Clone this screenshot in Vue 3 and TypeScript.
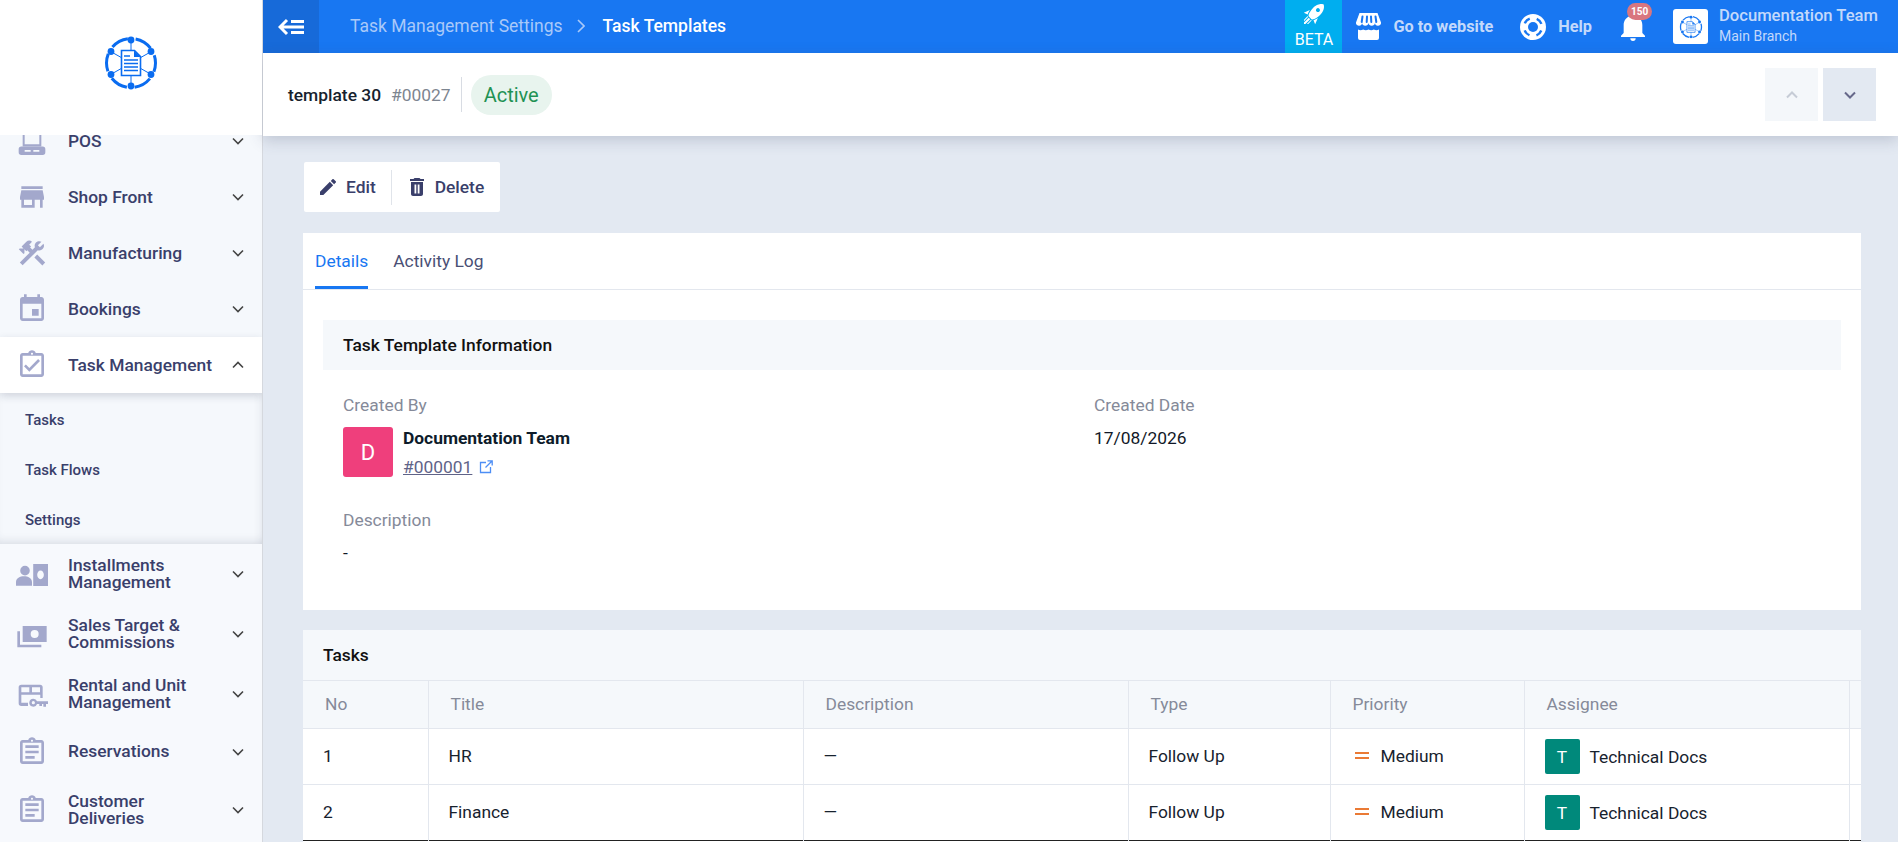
<template>
  <div class="shell">
    <svg class="defs" width="0" height="0">
      <symbol id="doc-logo" viewBox="0 0 56 56">
        <circle cx="28" cy="28" r="24.5" fill="none" stroke="currentColor" stroke-width="3" stroke-dasharray="17.65 8" stroke-dashoffset="8.8" />
        <g stroke="currentColor" stroke-width="1">
          <line x1="28" y1="6" x2="28" y2="50" />
          <line x1="8.5" y1="17" x2="47.5" y2="39" />
          <line x1="47.5" y1="17" x2="8.5" y2="39" />
        </g>
        <g fill="currentColor">
          <circle cx="28" cy="5" r="3.4" />
          <circle cx="28" cy="51" r="3.4" />
          <circle cx="8" cy="16.5" r="3.4" />
          <circle cx="48" cy="16.5" r="3.4" />
          <circle cx="8" cy="39.5" r="3.4" />
          <circle cx="48" cy="39.5" r="3.4" />
        </g>
        <path d="M18.5 15.5h13l6 6v19h-19z" fill="#fff" stroke="currentColor" stroke-width="1.6" />
        <path d="M31 15.5l6.5 6.5H31z" fill="currentColor" />
        <path d="M21 21h6M21 25h14M21 28.5h14M21 32h14M21 35.5h14" stroke="currentColor" stroke-width="1.3" fill="none" />
      </symbol>
    </svg>

    <aside class="sidebar">
      <div class="logo">
        <svg class="logo-mark" width="56" height="56"><use href="#doc-logo" /></svg>
      </div>
      <nav class="menu">
        <template v-for="item in menu" :key="item.label">
          <div class="menu-row" :class="[item.size, { open: item.open }]">
            <svg class="menu-icon" viewBox="0 0 24 24" width="32" height="32">
              <path :d="item.icon" fill-rule="evenodd" />
            </svg>
            <span class="menu-label">{{ item.label }}</span>
            <svg class="menu-chev" viewBox="0 0 12 8" width="12" height="8">
              <path :d="item.open ? 'M1 6.5l5-5 5 5' : 'M1 1.5l5 5 5-5'" />
            </svg>
          </div>
          <div v-if="item.open" class="submenu">
            <div v-for="sub in item.children" :key="sub" class="sub-row">{{ sub }}</div>
          </div>
        </template>
      </nav>
    </aside>

    <div class="main">
      <header class="topbar">
        <button class="toggle" type="button" aria-label="Toggle menu">
          <svg viewBox="0 0 26 18" width="26" height="18">
            <path d="M9 2L2 9l7 7M3 9h23M13 3.5h13M13 14.5h13" fill="none" stroke="#fff" stroke-width="3" />
          </svg>
        </button>
        <div class="crumbs">
          <span class="crumb">Task Management Settings</span>
          <svg viewBox="0 0 8 14" width="8" height="14"><path d="M1 1l6 6-6 6" fill="none" stroke="#a9c9f9" stroke-width="1.6" /></svg>
          <span class="crumb current">Task Templates</span>
        </div>
        <div class="top-right">
          <div class="beta">
            <svg viewBox="0 0 24 24" width="24" height="24">
              <path fill="#fff" d="M13.13 22.19L11.5 18.36C13.07 17.78 14.54 17 15.9 16.09L13.13 22.19M5.64 12.5L1.81 10.87L7.91 8.1C7 9.46 6.22 10.93 5.64 12.5M21.61 2.39C21.61 2.39 16.66 .269 11 5.93C8.81 8.12 7.5 10.53 6.65 12.64C6.37 13.39 6.56 14.21 7.11 14.77L9.24 16.89C9.79 17.45 10.61 17.63 11.36 17.35C13.5 16.53 15.88 15.19 18.07 13C23.73 7.34 21.61 2.39 21.61 2.39M14.54 9.46C13.76 8.68 13.76 7.41 14.54 6.63S16.59 5.85 17.37 6.63C18.14 7.41 18.15 8.68 17.37 9.46C16.59 10.24 15.32 10.24 14.54 9.46M6.24 22L9.88 18.36C9.54 18.27 9.21 18.12 8.91 17.91L4.83 22H6.24M2 22H3.41L8.18 17.24L6.76 15.83L2 20.59V22M2 19.17L6.09 15.09C5.88 14.79 5.73 14.47 5.64 14.12L2 17.76V19.17Z" />
            </svg>
            <span>BETA</span>
          </div>
          <a class="top-link site">
            <svg viewBox="0 0 25 27" width="25" height="27">
              <path fill="#fff" d="M3.5 0h18L25 9.5a3 3 0 0 1-6 .6 3.3 3.3 0 0 1-6.5 0 3.3 3.3 0 0 1-6.5 0 3 3 0 0 1-6-.6z" />
              <path stroke="#1877f2" stroke-width="2" stroke-linecap="round" d="M6.5 3.5L5.7 9M11 3.5L10.7 9M15 3.5L15.3 9M19.500 3.500L20.300 9" />
              <path fill="#fff" d="M2 16.500c1.700 1 3.600.9 5.200-.1 1.600 1 3.600 1 5.300 0 1.700 1 3.700 1 5.300 0 1.600 1 3.500 1.100 5.200.1V25a2 2 0 0 1-2 2H4a2 2 0 0 1-2-2z" />
            </svg>
            <span>Go to website</span>
          </a>
          <a class="top-link help">
            <svg viewBox="0 0 26 26" width="26" height="26">
              <circle cx="13" cy="13" r="13" fill="#fff" />
              <circle cx="13" cy="13" r="5" fill="#1877f2" />
              <circle cx="13" cy="13" r="9" fill="none" stroke="#1877f2" stroke-width="2.4" stroke-dasharray="7 7.140" stroke-dashoffset="10.600" />
            </svg>
            <span>Help</span>
          </a>
          <div class="bell">
            <svg viewBox="3 2 18 21" width="24" height="28">
              <path fill="#fff" d="M21,19V20H3V19L5,17V11C5,7.9 7.03,5.17 10,4.29C10,4.19 10,4.1 10,4A2,2 0 0,1 12,2A2,2 0 0,1 14,4C14,4.1 14,4.19 14,4.29C16.97,5.17 19,7.9 19,11V17L21,19M14,21A2,2 0 0,1 12,23A2,2 0 0,1 10,21" />
            </svg>
            <span class="badge">150</span>
          </div>
          <div class="org">
            <div class="org-logo">
              <svg width="24" height="24"><use href="#doc-logo" /></svg>
            </div>
            <div class="org-text">
              <div class="org-name">Documentation Team</div>
              <div class="org-branch">Main Branch</div>
            </div>
          </div>
        </div>
      </header>

      <section class="subheader">
        <span class="record-name">template 30</span>
        <span class="record-no">#00027</span>
        <span class="record-sep"></span>
        <span class="pill">Active</span>
        <div class="pager">
          <button class="page-btn up" type="button" aria-label="Previous">
            <svg viewBox="0 0 12 8" width="12" height="8"><path d="M1 6.500l5-5 5 5" /></svg>
          </button>
          <button class="page-btn down" type="button" aria-label="Next">
            <svg viewBox="0 0 12 8" width="12" height="8"><path d="M1 1.500l5 5 5-5" /></svg>
          </button>
        </div>
      </section>

      <div class="content">
        <div class="actions">
          <button class="action" type="button">
            <svg viewBox="3 3 18 18" width="16" height="16">
              <path d="M3 17.250V21h3.750L17.810 9.940l-3.750-3.750L3 17.250zM20.710 7.040a1 1 0 0 0 0-1.410l-2.340-2.340a1 1 0 0 0-1.410 0l-1.830 1.830 3.750 3.750 1.830-1.830z" />
            </svg>
            Edit
          </button>
          <span class="action-sep"></span>
          <button class="action" type="button">
            <svg viewBox="5 3 14 18" width="16" height="18">
              <path fill-rule="evenodd" d="M6 19c0 1.100.9 2 2 2h8c1.100 0 2-.9 2-2V7H6v12zM9.500 9.500h1.800v9H9.500zM12.700 9.500h1.800v9h-1.800zM19 4h-3.500l-1-1h-5l-1 1H5v2h14V4z" />
            </svg>
            Delete
          </button>
        </div>

        <div class="card details">
          <div class="tabs">
            <div class="tab active">Details</div>
            <div class="tab">Activity Log</div>
          </div>
          <div class="section-title">Task Template Information</div>
          <div class="info-grid">
            <div>
              <div class="info-label">Created By</div>
              <div class="person">
                <div class="person-avatar">D</div>
                <div>
                  <div class="person-name">Documentation Team</div>
                  <div class="person-link">
                    <a>#000001</a>
                    <svg viewBox="0 0 14 14" width="14" height="14">
                      <path d="M7 2.500H1.500v10h10V7M8.500.8h4.700v4.700M13 1L6.500 7.500" fill="none" stroke="#4d8ef5" stroke-width="1.300" />
                    </svg>
                  </div>
                </div>
              </div>
            </div>
            <div>
              <div class="info-label">Created Date</div>
              <div class="info-value">17/08/2026</div>
            </div>
            <div class="desc">
              <div class="info-label">Description</div>
              <div class="info-value">-</div>
            </div>
          </div>
        </div>

        <div class="card tasks">
          <div class="tasks-title">Tasks</div>
          <table class="task-table">
            <colgroup>
              <col class="c-no" /><col class="c-title" /><col class="c-desc" /><col class="c-type" /><col class="c-pri" /><col class="c-ass" /><col />
            </colgroup>
            <thead>
              <tr>
                <th>No</th><th>Title</th><th>Description</th><th>Type</th><th>Priority</th><th>Assignee</th><th></th>
              </tr>
            </thead>
            <tbody>
              <tr v-for="task in tasks" :key="task.no">
                <td>{{ task.no }}</td>
                <td>{{ task.title }}</td>
                <td>—</td>
                <td>{{ task.type }}</td>
                <td>
                  <span class="priority"><i class="pri-mark"></i>{{ task.priority }}</span>
                </td>
                <td>
                  <span class="assignee"><span class="assignee-avatar">T</span>{{ task.assignee }}</span>
                </td>
                <td></td>
              </tr>
            </tbody>
          </table>
        </div>
      </div>
    </div>
  </div>
</template>

<script setup lang="ts">
interface MenuItem {
  label: string
  icon: string
  size?: string
  open?: boolean
  children?: string[]
}

const CLIPBOARD =
  'M19 3h-4.180C14.400 1.840 13.300 1 12 1c-1.300 0-2.400.84-2.820 2H5c-1.100 0-2 .9-2 2v14c0 1.100.9 2 2 2h14c1.100 0 2-.9 2-2V5c0-1.100-.9-2-2-2zm-7-.25c.41 0 .75.34.75.75s-.34.75-.75.75-.75-.34-.75-.75.34-.75.75-.75zM5 5h14v14H5z'

const menu: MenuItem[] = [
  {
    label: 'POS',
    icon: 'M5 1h14v15H5zM6.500 2.500v12h11v-12zM4 16.200h16a2 2 0 0 1 2 2v2.300a2 2 0 0 1-2 2H4a2 2 0 0 1-2-2v-2.300a2 2 0 0 1 2-2zM6.500 18.700v1.300h4.500v-1.300zM13 18.700v1.300h4.500v-1.300z',
  },
  {
    label: 'Shop Front',
    icon: 'M20 4H4v2h16V4zm1 10v-2l-1-5H4l-1 5v2h1v6h10v-6h4v6h2v-6h1zm-9 4H6v-4h6v4z',
  },
  {
    label: 'Manufacturing',
    icon: 'M13.780 15.300L19.780 21.300L21.890 19.140L15.890 13.140L13.780 15.300M17.500 10.100C17.110 10.100 16.690 10.050 16.360 9.910L4.970 21.250L2.860 19.140L10.270 11.740L8.500 9.960L7.780 10.660L6.330 9.250V12.110L5.630 12.810L2.110 9.250L2.810 8.550H5.620L4.220 7.140L7.780 3.580C8.950 2.410 10.830 2.410 12 3.580L9.890 5.740L11.300 7.140L10.590 7.850L12.380 9.630L14.200 7.750C14.060 7.420 14 7 14 6.630C14 4.660 15.560 3.110 17.500 3.110C18.090 3.110 18.610 3.250 19.080 3.530L16.410 6.200L17.910 7.700L20.580 5.030C20.860 5.500 21 6 21 6.630C21 8.550 19.450 10.100 17.500 10.100Z',
  },
  {
    label: 'Bookings',
    icon: 'M16 1v2H8V1H6v2H5c-1.110 0-2 .9-2 2v14c0 1.100.89 2 2 2h14c1.100 0 2-.9 2-2V5c0-1.100-.9-2-2-2h-1V1zM5 8h14v11H5zM12 12v5h5v-5z',
  },
  {
    label: 'Task Management',
    icon: CLIPBOARD + 'M18 9l-1.410-1.420L10 14.170l-2.590-2.580L6 13l4 4z',
    open: true,
    children: ['Tasks', 'Task Flows', 'Settings'],
  },
  {
    label: 'Installments Management',
    size: 'tall',
    icon: 'M6.750 5.900a3.600 3.600 0 1 1 0 7.200 3.600 3.600 0 0 1 0-7.200zM0 20.800V18c0-3 3-4.400 6-4.400s6 1.400 6 4.400v2.800zM12.900 4.500H24V21H12.900zM18.400 9.300c-1.400 0-2.500 1.500-2.500 3.300s1.100 3.300 2.500 3.300 2.500-1.500 2.500-3.300-1.100-3.300-2.500-3.300z',
  },
  {
    label: 'Sales Target & Commissions',
    size: 'tall',
    icon: 'M5 6H23V18H5zM14 9A3 3 0 0 1 17 12A3 3 0 0 1 14 15A3 3 0 0 1 11 12A3 3 0 0 1 14 9zM1 10H3V20H19V22H1z',
  },
  {
    label: 'Rental and Unit Management',
    size: 'mid',
    icon: 'M4 5h14a2 2 0 0 1 2 2v8h-1.800v-2.500H4v6h5V21H4a2 2 0 0 1-2-2V7a2 2 0 0 1 2-2zM4 7v3.700h6V7zM12 7v3.700h6V7zM13 15.500a3 3 0 0 1 2.800 2H24v2h-1.500v2h-2v-2h-1v1.500h-2v-1.500h-1.700a3 3 0 1 1-2.800-4zM13 17.300a1.200 1.200 0 1 0 0 2.400 1.200 1.200 0 0 0 0-2.400z',
  },
  {
    label: 'Reservations',
    size: 'single',
    icon: CLIPBOARD + 'M7 15h7v2H7zM7 11h10v2H7zM7 7h10v2H7z',
  },
  {
    label: 'Customer Deliveries',
    size: 'tall',
    icon: CLIPBOARD + 'M7 15h7v2H7zM7 11h10v2H7zM7 7h10v2H7z',
  },
]

const tasks = [
  { no: 1, title: 'HR', type: 'Follow Up', priority: 'Medium', assignee: 'Technical Docs' },
  { no: 2, title: 'Finance', type: 'Follow Up', priority: 'Medium', assignee: 'Technical Docs' },
]
</script>

<style scoped>
.shell {
  background: #e3e9f2;
  color: #111827;
  display: flex;
  font-family: Roboto, "Liberation Sans", sans-serif;
  font-size: 17.4px;
  height: 100vh;
  overflow: hidden;
}

.defs {
  position: absolute;
}

button {
  background: none;
  border: 0;
  cursor: pointer;
  font: inherit;
  padding: 0;
}

.sidebar {
  background: #f7f9fd;
  border-right: 1px solid #d5d8de;
  box-sizing: border-box;
  flex: 0 0 263px;
  height: 100%;
  overflow: hidden;
}

.logo {
  align-items: center;
  background: #fff;
  display: flex;
  height: 135px;
  justify-content: center;
  position: relative;
  z-index: 2;
}

.logo-mark {
  color: #0a6cf0;
  margin: 0 0 10px 0;
}

.menu {
  margin-top: -22px;
}

.menu-row {
  align-items: center;
  background: #f5f8fc;
  color: #3a3f6b;
  display: flex;
  font-weight: 500;
  gap: 12px;
  height: 56px;
  line-height: 17px;
  padding: 0 18px 0 16px;
  position: relative;
}

.menu-row.tall {
  background: #f7f9fd;
  height: 60px;
}

.menu-row.mid {
  background: #f7f9fd;
  height: 59px;
}

.menu-row.single {
  background: #f7f9fd;
  height: 57px;
}

.menu-row.open {
  background: #fff;
  box-shadow: 0 3px 8px rgb(40 50 80 / 18%);
  z-index: 1;
}

.menu-icon {
  fill: #a3a8cc;
  flex: none;
  margin-right: 8px;
}

.menu-label {
  flex: 1;
}

.menu-chev {
  fill: none;
  flex: none;
  stroke: #444;
  stroke-width: 1.600;
}

.submenu {
  background: #f5f8fc;
  box-shadow: inset 0 -8px 10px -6px rgb(40 50 80 / 14%), inset -8px 0 10px -8px rgb(40 50 80 / 10%);
  box-sizing: border-box;
  height: 151px;
  padding-top: 2px;
}

.sub-row {
  align-items: center;
  color: #3a3f6b;
  display: flex;
  font-size: 15px;
  font-weight: 500;
  height: 50px;
  padding-left: 25px;
}

.main {
  display: flex;
  flex: 1;
  flex-direction: column;
  min-width: 0;
}

.topbar {
  align-items: center;
  background: #1877f2;
  display: flex;
  flex: none;
  height: 53px;
}

.toggle {
  align-items: center;
  align-self: stretch;
  background: #176ad9;
  display: flex;
  justify-content: center;
  width: 56px;
}

.crumbs {
  align-items: center;
  display: flex;
  gap: 14px;
  margin-left: 31px;
  padding-bottom: 2px;
}

.crumb {
  color: #a9c9f9;
  font-size: 17.5px;
}

.crumb.current {
  color: #fff;
  font-weight: 500;
  margin-left: 4px;
}

.top-right {
  align-items: center;
  align-self: stretch;
  display: flex;
  margin-left: auto;
}

.beta {
  align-items: center;
  background: #00aeef;
  box-sizing: border-box;
  color: #fff;
  display: flex;
  flex-direction: column;
  font-size: 16px;
  height: 53px;
  justify-content: space-between;
  line-height: 17px;
  padding: 2px 0 5px;
  width: 57px;
}

.top-link {
  align-items: center;
  color: #c3d9fb;
  display: flex;
  font-size: 16.3px;
  font-weight: 700;
  gap: 12px;
}

.site {
  margin-left: 14px;
}

.help {
  margin-left: 27px;
}

.bell {
  height: 28px;
  margin-left: 29px;
  position: relative;
  width: 24px;
}

.badge {
  background: #d9767f;
  border-radius: 9px;
  color: #fff;
  font-size: 10px;
  font-weight: 700;
  left: 6px;
  line-height: 17px;
  padding: 0 4px;
  position: absolute;
  top: -10px;
}

.org {
  align-items: center;
  display: flex;
  gap: 11px;
  margin-left: 28px;
  margin-right: 24px;
  width: 201px;
}

.org-logo {
  align-items: center;
  background: #fff;
  border-radius: 3px;
  color: #1877f2;
  display: flex;
  flex: none;
  height: 35px;
  justify-content: center;
  width: 35px;
}

.org-name {
  color: #c3d9fb;
  font-size: 16.6px;
  font-weight: 500;
  line-height: 18px;
  margin-top: -3px;
  white-space: nowrap;
}

.org-branch {
  color: #c3d9fb;
  font-size: 14px;
  line-height: 16px;
  margin-top: 3px;
}

.subheader {
  align-items: center;
  background: #fff;
  box-shadow: 0 4px 14px rgb(60 70 100 / 22%);
  display: flex;
  flex: none;
  height: 83px;
  padding: 0 22px 0 25px;
  position: relative;
}

.record-name {
  color: #17222e;
  font-weight: 500;
}

.record-no {
  color: #7d8590;
  margin-left: 10px;
}

.record-sep {
  background: #d8dce3;
  height: 35px;
  margin-left: 10px;
  width: 1px;
}

.pill {
  background: #e8f4ee;
  border-radius: 20px;
  color: #1f9254;
  font-size: 20px;
  line-height: 40px;
  margin-left: 9px;
  padding: 0 13px;
}

.pager {
  display: flex;
  gap: 5px;
  margin-left: auto;
}

.page-btn {
  align-items: center;
  display: flex;
  height: 53px;
  justify-content: center;
  width: 53px;
}

.page-btn svg {
  fill: none;
  stroke-width: 2;
}

.page-btn.up {
  background: #f4f7fa;
}

.page-btn.up svg {
  stroke: #c6ccd6;
}

.page-btn.down {
  background: #e3e9f2;
}

.page-btn.down svg {
  stroke: #66688a;
}

.content {
  display: flex;
  flex: 1;
  flex-direction: column;
  gap: 20px;
  padding: 26px 37px 0 40px;
}

.actions {
  align-items: center;
  align-self: flex-start;
  background: #fff;
  border-radius: 2px;
  display: flex;
  height: 50px;
  margin: 0 0 1px 1px;
  padding: 0 16px 0 16px;
}

.action {
  align-items: center;
  color: #3a3f6b;
  display: flex;
  font-weight: 500;
  gap: 10px;
}

.action svg {
  fill: #3a3f6b;
}

.action-sep {
  background: #e0e4ea;
  height: 35px;
  margin: 0 17px 0 15px;
  width: 1px;
}

.card {
  background: #fff;
}

.details {
  flex: none;
  height: 377px;
}

.tabs {
  border-bottom: 1px solid #e3e7ee;
  box-sizing: border-box;
  display: flex;
  gap: 25px;
  height: 57px;
  padding-left: 12px;
}

.tab {
  box-sizing: border-box;
  color: #4a4f75;
  height: 56px;
  line-height: 46px;
  padding-top: 5px;
}

.tab.active {
  border-bottom: 3px solid #1877f2;
  color: #1877f2;
}

.section-title {
  background: #f5f8fb;
  color: #111;
  font-weight: 500;
  height: 50px;
  line-height: 50px;
  margin: 30px 20px 0;
  padding-left: 20px;
}

.info-grid {
  column-gap: 24px;
  display: grid;
  grid-template-columns: 1fr 1fr;
  margin: 25px 40px 0;
}

.info-label {
  color: #858a99;
  line-height: 20px;
}

.info-value {
  color: #111827;
  line-height: 20px;
  margin-top: 13px;
}

.person {
  display: flex;
  gap: 10px;
  margin-top: 12px;
}

.person-avatar {
  align-items: center;
  background: #ef3f7c;
  border-radius: 3px;
  color: #fff;
  display: flex;
  font-size: 22px;
  height: 50px;
  justify-content: center;
  width: 50px;
}

.person-name {
  color: #0d1b2a;
  font-weight: 700;
  line-height: 22px;
}

.person-link {
  align-items: center;
  display: flex;
  gap: 7px;
  margin-top: 8px;
}

.person-link a {
  color: #5f6388;
  line-height: 20px;
  text-decoration: underline;
}

.desc {
  grid-column: 1 / -1;
  margin-top: 33px;
}

.tasks {
  flex: 1;
  min-height: 0;
}

.tasks-title {
  background: #f5f8fb;
  border-bottom: 1px solid #e3e7ee;
  color: #111;
  font-weight: 500;
  height: 50px;
  line-height: 50px;
  padding-left: 20px;
}

.task-table {
  border-bottom: 1px solid #222;
  border-collapse: collapse;
  table-layout: fixed;
  width: 100%;
}

.c-no {
  width: 125px;
}

.c-title {
  width: 375px;
}

.c-desc {
  width: 325px;
}

.c-type {
  width: 202px;
}

.c-pri {
  width: 194px;
}

.c-ass {
  width: 325px;
}

th,
td {
  border-right: 1px solid #e3e7ee;
  font-weight: 400;
  text-align: left;
}

th {
  background: #f5f8fb;
  border-bottom: 1px solid #e3e7ee;
  color: #858a99;
  height: 46px;
  padding: 0 0 1px 22px;
}

td {
  color: #17222e;
  height: 53px;
  padding: 0 0 2px 20px;
}

tbody tr:first-child td {
  border-bottom: 1px solid #e3e7ee;
}

th:last-child,
td:last-child {
  border-right: 0;
}

.priority {
  align-items: center;
  display: flex;
  gap: 12px;
  margin-left: 4px;
}

.pri-mark {
  border-bottom: 2px solid #ea7a35;
  border-top: 2px solid #ea7a35;
  display: block;
  height: 3px;
  width: 14px;
}

.assignee {
  align-items: center;
  display: flex;
  gap: 10px;
  margin-top: 2px;
}

.assignee-avatar {
  align-items: center;
  background: #00897b;
  border-radius: 2px;
  color: #fff;
  display: flex;
  height: 35px;
  justify-content: center;
  width: 35px;
}
</style>
